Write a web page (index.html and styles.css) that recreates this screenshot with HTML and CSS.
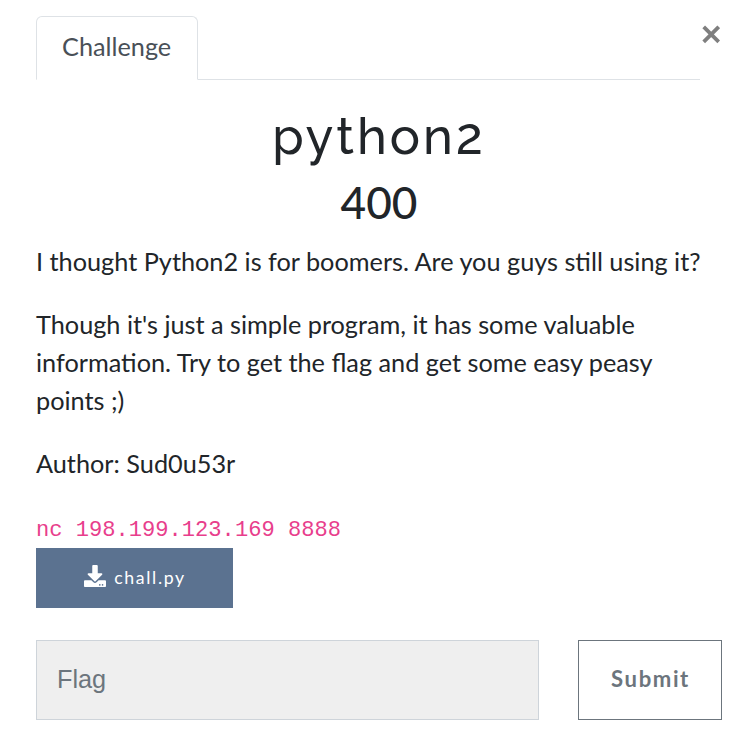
FILE: index.html
```html
<!DOCTYPE html>
<html lang="en">
<head>
<meta charset="utf-8">
<title>python2</title>
<link rel="stylesheet" href="styles.css">
</head>
<body>
<main class="modal">
  <header class="top">
    <nav class="tabs"><a class="tab">Challenge</a></nav>
    <button class="close" aria-label="Close"><svg width="18" height="19" viewBox="0 0 18 19"><path d="M1.700 1.800 16.700 16.800M16.700 1.800 1.700 16.800"/></svg></button>
  </header>
  <h2 class="name">python2</h2>
  <h3 class="value">400</h3>
  <div class="desc">
    <p>I thought Python2 is for boomers. Are you guys still using it?</p>
    <p>Though it's just a simple program, it has some valuable information. Try to get the flag and get some easy peasy points ;)</p>
    <p>Author: Sud0u53r</p>
    <code>nc 198.199.123.169 8888</code>
  </div>
  <a class="file"><svg class="dl" viewBox="0 0 512 512"><path d="M216 0h80c13.300 0 24 10.700 24 24v168h87.700c17.800 0 26.700 21.500 14.100 34.100L269.700 378.300c-7.500 7.500-19.800 7.500-27.300 0L90.100 226.100c-12.600-12.600-3.700-34.100 14.100-34.100H192V24c0-13.300 10.700-24 24-24zm296 376v112c0 13.300-10.700 24-24 24H24c-13.300 0-24-10.700-24-24V376c0-13.300 10.700-24 24-24h146.700l49 49c20.100 20.100 52.500 20.100 72.600 0l49-49H488c13.300 0 24 10.700 24 24zm-124 88c0-11-9-20-20-20s-20 9-20 20 9 20 20 20 20-9 20-20zm64 0c0-11-9-20-20-20s-20 9-20 20 9 20 20 20 20-9 20-20z"/></svg><span>chall.py</span></a>
  <form class="answer">
    <input class="flag" placeholder="Flag">
    <button class="submit" type="button">Submit</button>
  </form>
</main>
</body>
</html>
```
FILE: styles.css
```css
* { box-sizing: border-box; }
body { margin: 0; background: #fff; color: #212529; font: 25.270px/38px Lato, sans-serif; overflow: hidden; }
.modal { padding: 16px 26px 0 36px; height: 750px; }
.top { display: flex; align-items: flex-start; height: 64px; }
.tabs { width: 664px; height: 64px; border-bottom: 1px solid #dee2e6; flex: none; }
.tab { display: block; width: 162px; height: 64px; padding: 10px 25px; border: 1px solid #dee2e6; border-bottom-color: #fff; border-radius: 6px 6px 0 0; color: #495057; background: #fff; white-space: nowrap; }
.close { border: 0; background: none; padding: 0; margin: 9px 0 0 2px; width: 18px; height: 19px; flex: none; }
.close svg { display: block; fill: none; stroke: #7f7f7f; stroke-width: 3.800; }
.name { font: 500 50.500px/61px Raleway, Lato, sans-serif; letter-spacing: 3px; margin: 26px 0 0; text-align: center; }
.value { font: 500 44.200px/54px Lato, sans-serif; margin: 8px 0 0; text-align: center; }
.desc { margin-top: 13px; margin-right: -8px; padding-right: 8px; }
.desc p { margin: 0 0 25px; }
.desc code { display: block; font: 22.100px/38px "Liberation Mono", monospace; color: #e83e8c; padding-top: 5px; margin-bottom: -2px; }
.file { display: flex; align-items: center; justify-content: center; width: 197px; height: 60px; padding-bottom: 2px; background: #5b7290; color: #fff; font-size: 17.700px; letter-spacing: 1.650px; }
.file span { padding-top: 1px; }
.dl { width: 22px; height: 22px; fill: #fff; margin: 0 8px 2px 1px; }
.answer { display: flex; justify-content: space-between; width: 686px; margin: 32px 0 0; }
.flag { width: 503px; height: 80px; padding: 0 20px 2px; border: 1px solid #ced4da; background: #efefef; font: 25.270px "Liberation Sans", sans-serif; border-radius: 0; }
.flag::placeholder { color: #6c757d; opacity: 1; }
.submit { width: 144px; height: 80px; border: 1px solid #6c757d; background: #fff; color: #6c757d; font: 700 22.100px Lato, sans-serif; letter-spacing: 1.600px; padding: 0 0 3px 1px; }
```
